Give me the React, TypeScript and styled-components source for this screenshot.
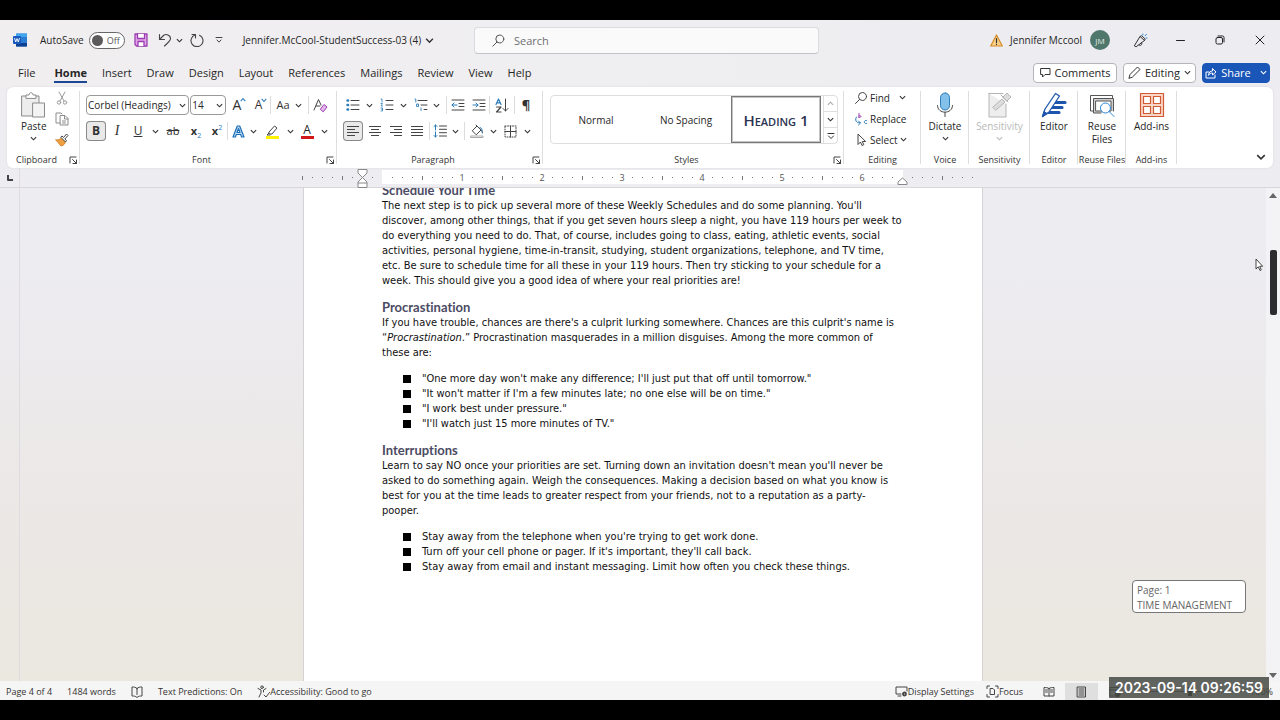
import React from "react";
import styled, { createGlobalStyle, css } from "styled-components";

const ui = `"Open Sans", "Noto Sans", sans-serif`;
const body = `"DejaVu Sans Condensed", "Open Sans", sans-serif`;

const Global = createGlobalStyle`
  *, *::before, *::after { box-sizing: border-box; }
  body { margin: 0; background: #000; }
  button, input, select { font: inherit; color: inherit; margin: 0; padding: 0; border: 0; background: none; }
  h2, p, ul { margin: 0; padding: 0; }
  svg { display: block; flex: none; }
`;

const Frame = styled.div`
  height: 100vh;
  padding: 20px 0;
  background: #000;
  display: flex;
  font-family: ${ui};
  font-size: 10px;
  color: #262626;
`;
const Win = styled.div`
  flex: 1;
  min-width: 0;
  display: flex;
  flex-direction: column;
  position: relative;
  background: linear-gradient(180deg, #efedf0 0%, #edecf1 34%, #ebe7e4 78%, #ebe8df 100%);
`;

/* ---------- title bar ---------- */
const TitleBar = styled.header`
  height: 40px;
  display: grid;
  grid-template-columns: minmax(0, 1fr) minmax(180px, 345px) minmax(0, 1fr);
  align-items: center;
  padding-left: 13px;
  background: linear-gradient(90deg, #f1eef0, #efeef0 45%, #ececf1);
`;
const Cluster = styled.div<{ $gap?: number; $end?: boolean }>`
  display: flex;
  align-items: center;
  gap: ${(p) => p.$gap ?? 0}px;
  justify-content: ${(p) => (p.$end ? "flex-end" : "flex-start")};
  white-space: nowrap;
`;
const SwitchLabel = styled.label`
  display: flex;
  align-items: center;
  gap: 5px;
  margin: 0 9px 0 13px;
`;
const Switch = styled.span`
  position: relative;
  width: 36px;
  height: 17px;
  border: 1px solid #666;
  border-radius: 9px;
  background: #fff;
  display: flex;
  align-items: center;
  justify-content: flex-end;
  padding-right: 4px;
  font-size: 9px;
  color: #555;
  &::before {
    content: "";
    position: absolute;
    left: 2px;
    top: 2px;
    width: 11px;
    height: 11px;
    border-radius: 50%;
    background: #5c5a5b;
  }
  input { position: absolute; inset: 0; opacity: 0; }
`;
const ToolBtn = styled.button<{ $w?: number; $on?: boolean }>`
  width: ${(p) => p.$w ?? 20}px;
  height: 20px;
  flex: none;
  display: flex;
  align-items: center;
  justify-content: center;
  border-radius: 4px;
  ${(p) => p.$on && css`background: #e9e9e9; box-shadow: inset 0 0 0 1px #8a8a8a;`}
`;
const DocTitle = styled.button`
  display: flex;
  align-items: center;
  gap: 4px;
  margin-left: 10px;
`;
const Search = styled.label`
  display: flex;
  align-items: center;
  gap: 9px;
  height: 27px;
  padding: 0 17px;
  background: #fbfafb;
  border: 1px solid #dcdadc;
  border-bottom-color: #c4c2c4;
  border-radius: 4px;
  font-size: 11px;
  input { flex: 1; min-width: 0; outline: 0; }
  input::placeholder { color: #707070; opacity: 1; }
`;
const Avatar = styled.span`
  width: 20px;
  height: 20px;
  border-radius: 50%;
  background: #4f776b;
  color: #e3ece8;
  font-size: 8px;
  display: grid;
  place-items: center;
  margin: 0 10px 0 8px;
`;
const WinBtn = styled.button`
  width: 40px;
  height: 28px;
  display: grid;
  place-items: center;
`;

/* ---------- tabs ---------- */
const TabRow = styled.nav`
  height: 27px;
  display: flex;
  align-items: center;
  gap: 1px;
  padding: 0 10px 2px 11px;
  background: linear-gradient(90deg, #f1eef0, #efeef0 45%, #ececf1);
`;
const Tab = styled.button<{ $on?: boolean; $first?: boolean }>`
  height: 20px;
  padding: 0 7px;
  margin-right: ${(p) => (p.$first ? 4 : 0)}px;
  font-size: 11px;
  position: relative;
  font-weight: ${(p) => (p.$on ? 700 : 400)};
  ${(p) => p.$on && css`
    &::after { content: ""; position: absolute; left: 7px; right: 7px; bottom: 0; height: 2px; background: #1d4697; }
  `}
`;
const TabActions = styled.div`
  margin-left: auto;
  display: flex;
  gap: 6px;
`;
const PillBtn = styled.button<{ $primary?: boolean; $w: number }>`
  width: ${(p) => p.$w}px;
  height: 20px;
  display: flex;
  align-items: center;
  justify-content: center;
  gap: 4px;
  border: 1px solid ${(p) => (p.$primary ? "#1a55b8" : "#b5b5b8")};
  border-radius: 4px;
  background: ${(p) => (p.$primary ? "#1a55b8" : "#fff")};
  color: ${(p) => (p.$primary ? "#fff" : "#262626")};
  font-size: 11px;
`;

/* ---------- ribbon ---------- */
const Ribbon = styled.section`
  height: 81px;
  margin: 0 7px;
  display: flex;
  background: #fff;
  border-radius: 6px;
  box-shadow: 0 0 2px #d5d3d8;
`;
const Group = styled.div<{ $w: number }>`
  position: relative;
  flex: none;
  width: ${(p) => p.$w}px;
  padding: 8px 6px 0 6px;
  display: flex;
  flex-direction: column;
  &::after { content: ""; position: absolute; right: 0; top: 4px; bottom: 4px; width: 1px; background: #dedede; }
`;
const GroupLabel = styled.div<{ $launch?: boolean }>`
  position: absolute;
  left: 0;
  right: ${(p) => (p.$launch ? 14 : 0)}px;
  bottom: 2px;
  line-height: 12px;
  text-align: center;
  font-size: 9px;
  white-space: nowrap;
  color: #333;
`;
const Launcher = styled.button`
  position: absolute;
  right: 1px;
  bottom: 2px;
  width: 12px;
  height: 12px;
  display: grid;
  place-items: center;
`;
const ToolRow = styled.div`
  display: flex;
  align-items: center;
  height: 20px;
  margin-bottom: 6px;
`;
const Gap = styled.span<{ $w: number }>`
  width: ${(p) => p.$w}px;
  flex: none;
`;
const Rule = styled.span`
  width: 1px;
  height: 18px;
  background: #dcdcdc;
  flex: none;
`;
const SelectBox = styled.label<{ $w: number }>`
  position: relative;
  width: ${(p) => p.$w}px;
  height: 20px;
  margin-right: 1px;
  border: 1px solid #999;
  border-radius: 4px;
  display: flex;
  align-items: center;
  select { appearance: none; width: 100%; height: 100%; padding-left: 1px; outline: 0; font-size: 10px; }
  svg { position: absolute; right: 2px; pointer-events: none; }
`;
const Big = styled.button<{ $dim?: boolean }>`
  display: flex;
  flex-direction: column;
  align-items: center;
  gap: 2px;
  margin-top: -3px;
  line-height: 13px;
  color: ${(p) => (p.$dim ? "#b9b9b9" : "#262626")};
`;
const ClipRow = styled.div`
  display: flex;
  gap: 5px;
  padding-left: 8px;
`;
const ClipTools = styled.div`
  display: flex;
  flex-direction: column;
  gap: 1px;
  margin-top: -7px;
`;
const Gallery = styled.div`
  display: flex;
  height: 49px;
  margin-left: 1px;
  border: 1px solid #dedede;
  border-radius: 4px;
`;
const StyleCell = styled.button<{ $on?: boolean }>`
  width: 90px;
  ${(p) => p.$on && css`border: 1px solid #777; box-shadow: inset 0 0 0 1px #c4c4c8;`}
`;
const HeadingSample = styled.span`
  font-size: 15px;
  font-weight: 600;
  font-variant: small-caps;
  color: #2a3350;
`;
const GalleryNav = styled.div`
  flex: 1;
  display: flex;
  flex-direction: column;
  margin-left: 2px;
  border-left: 1px solid #dedede;
  button { flex: 1; display: grid; place-items: center; }
  button + button { border-top: 1px solid #dedede; }
`;
const EditRow = styled.button`
  display: flex;
  align-items: center;
  height: 21px;
  gap: 2px;
  padding-left: 4px;
`;
const EditList = styled.div`
  display: flex;
  flex-direction: column;
  align-items: flex-start;
  margin-top: -8px;
`;
const Collapse = styled.button`
  margin: auto 5px 4px auto;
  width: 14px;
  height: 14px;
  display: grid;
  place-items: center;
`;

/* ---------- ruler ---------- */
const RulerRow = styled.div`
  height: 20px;
  display: flex;
  border-bottom: 1px solid #d9d7da;
  padding-right: 14px;
`;
const TabStop = styled.div`
  width: 20px;
  border-right: 1px solid #dedce0;
  display: grid;
  place-items: center;
`;
const RulerTrack = styled.div`
  flex: 1;
  display: flex;
  justify-content: center;
`;
const Ruler = styled.div`
  position: relative;
  width: 692px;
  flex: none;
  display: flex;
  align-items: center;
  background: linear-gradient(#fff, #fff) 85px 2px / 521px 14px no-repeat;
`;
const Mark = styled.span`
  width: 10px;
  flex: none;
  display: grid;
  place-items: center;
  font-size: 9px;
  line-height: 12px;
  color: #555;
`;
const Tick = styled.i<{ $long?: boolean }>`
  width: 1px;
  height: ${(p) => (p.$long ? 4 : 1)}px;
  background: #777;
`;
const Marker = styled.svg<{ $x: number }>`
  position: absolute;
  left: ${(p) => p.$x}px;
  top: 1px;
`;

/* ---------- document ---------- */
const Work = styled.div`
  flex: 1;
  min-height: 0;
  display: flex;
`;
const SideRuler = styled.div`
  width: 20px;
  border-right: 1px solid #dedce0;
`;
const Canvas = styled.main`
  flex: 1;
  min-width: 0;
  overflow: hidden;
  display: flex;
  justify-content: center;
`;
const Page = styled.article`
  width: 680px;
  flex: none;
  padding: 0 78px;
  background: #fff;
  border: solid #d4d2d4;
  border-width: 0 1px;
  font-family: ${body};
  font-size: 11px;
  line-height: 15px;
  color: #111;
  white-space: nowrap;
`;
const H = styled.h2<{ $cut?: boolean }>`
  font-family: Lato, sans-serif;
  font-size: 13px;
  line-height: 15px;
  font-weight: 700;
  font-variant-ligatures: none;
  color: #4b4b63;
  margin-top: ${(p) => (p.$cut ? -5 : 12)}px;
`;
const Bullets = styled.ul`
  list-style: none;
  padding: 11px 0 0 21px;
  li { display: flex; align-items: center; gap: 11px; }
  li::before { content: ""; width: 8px; height: 8px; background: #000; }
`;
const Scroll = styled.div`
  width: 14px;
  background: #f3f2f4;
  display: flex;
  flex-direction: column;
  align-items: center;
  padding: 5px 0 3px 0;
`;
const Thumb = styled.div`
  width: 7px;
  height: 65px;
  margin: 52px 0 auto;
  border-radius: 2px;
  background: #2d2d2f;
`;
const Arrow = styled.i<{ $down?: boolean }>`
  border: solid transparent;
  border-width: 0 4px;
  ${(p) => (p.$down ? css`border-top: 5px solid #666;` : css`border-bottom: 5px solid #666;`)}
`;
const PageTip = styled.div`
  position: absolute;
  right: 34px;
  bottom: 87px;
  width: 114px;
  height: 33px;
  padding: 2px 4px;
  border: 1px solid #777;
  border-radius: 4px;
  background: #fff;
  color: #666;
  line-height: 15px;
  white-space: nowrap;
`;
const Cursor = styled.svg`
  position: absolute;
  right: 17px;
  top: 238px;
`;

/* ---------- status bar ---------- */
const Status = styled.footer`
  height: 19px;
  display: flex;
  align-items: center;
  justify-content: space-between;
  background: #f6f5f5;
  padding: 2px 7px 0 6px;
  font-size: 9px;
  color: #333;
  white-space: nowrap;
`;
const StatusBtn = styled.button`
  display: flex;
  align-items: center;
`;
const ViewBtn = styled.button<{ $on?: boolean }>`
  width: 33px;
  height: 17px;
  display: grid;
  place-items: center;
  background: ${(p) => (p.$on ? "#dfdfdf" : "transparent")};
`;
const Zoom = styled.input`
  appearance: none;
  width: 105px;
  height: 12px;
  margin: 0 8px 0 6px;
  background: linear-gradient(#666, #666) center / 100% 1px no-repeat;
  &::-webkit-slider-thumb { appearance: none; width: 4px; height: 9px; background: #222; }
`;
const Stamp = styled.time`
  position: absolute;
  right: 11px;
  bottom: 2px;
  width: 160px;
  height: 21px;
  display: grid;
  place-items: center;
  background: rgba(72, 74, 70, 0.86);
  color: #fff;
  font: 600 14px Inter, sans-serif;
`;

/* ---------- icons ---------- */
const Chev = ({ s = 7, c = "#333", up = false }: { s?: number; c?: string; up?: boolean }) => (
  <svg width={s} height={s} viewBox="0 0 8 8" fill="none" stroke={c} strokeWidth="1.3">
    <path d={up ? "M1 5.5 4 2.5 7 5.5" : "M1 2.5 4 5.5 7 2.5"} />
  </svg>
);
const Ic = ({ w = 16, h = w, c = "#444", sw = 1, children }: { w?: number; h?: number; c?: string; sw?: number; children: React.ReactNode }) => (
  <svg width={w} height={h} viewBox={`0 0 ${w} ${h}`} fill="none" stroke={c} strokeWidth={sw} strokeLinecap="round" strokeLinejoin="round">
    {children}
  </svg>
);
const LaunchIcon = () => (
  <Ic w={9} c="#444"><path d="M1 7V1h6M3.500 3.500 7.500 7.500M7.500 4v3.500H4" /></Ic>
);
const blue = "#2b7cba";
const Lines = ({ rows }: { rows: [number, number][] }) => (
  <Ic w={14} c="#444"><path d={rows.map(([a, b], i) => `M${a} ${2.5 + i * 3}H${b}`).join("")} strokeLinecap="butt" /></Ic>
);

const Glyph = styled.span<{ $size?: number; $weight?: number; $italic?: boolean; $deco?: string; $serif?: boolean }>`
  position: relative;
  font-family: ${(p) => (p.$serif ? `"Liberation Serif", serif` : ui)};
  font-size: ${(p) => p.$size ?? 13}px;
  font-weight: ${(p) => p.$weight ?? 400};
  font-style: ${(p) => (p.$italic ? "italic" : "normal")};
  text-decoration: ${(p) => p.$deco ?? "none"};
  line-height: 16px;
  color: #333;
  sub, sup { font-size: 7px; line-height: 0; color: ${blue}; font-weight: 400; }
  svg { position: absolute; right: -5px; top: 0; }
`;
const ColorBar = styled.span<{ $c: string }>`
  display: flex;
  flex-direction: column;
  align-items: center;
  font-size: 12px;
  line-height: 12px;
  &::after { content: ""; width: 13px; height: 3px; background: ${(p) => p.$c}; }
`;

/* 0" sits at index 8; each inch has eight subdivisions */
const rulerMark = (i: number) => {
  if (i === 6 || i === 8 || i === 60) return null;
  if (i > 8 && i < 60 && (i - 8) % 8 === 0) return (i - 8) / 8;
  return <Tick $long={i % 4 === 0} />;
};

const tabs = ["File", "Home", "Insert", "Draw", "Design", "Layout", "References", "Mailings", "Review", "View", "Help"];

export default function App() {
  return (
    <Frame>
      <Global />
      <Win>
        <TitleBar>
          <Cluster>
            <svg width="14" height="14" viewBox="0 0 14 14">
              <rect x="3" y="0.5" width="11" height="13" rx="1" fill="#2b7cd3" />
              <path d="M3 0.5h11v3.5H3z" fill="#41a5ee" />
              <path d="M3 10h11v3.5H3z" fill="#103f91" />
              <rect x="0" y="3" width="8" height="8" rx="1" fill="#185abd" />
              <path d="M1.5 5 2.7 9 4 5.6 5.3 9 6.5 5" fill="none" stroke="#fff" strokeWidth="0.9" />
            </svg>
            <SwitchLabel>
              AutoSave
              <Switch><input type="checkbox" aria-label="AutoSave" />Off</Switch>
            </SwitchLabel>
            <ToolBtn $w={15} aria-label="Save">
              <Ic w={14} c="#9b3fb0" sw={1.3}><path d="M1 1h12v12H2.500L1 11.500z" fill="#e3a5ea" /><path d="M3.500 1v4.500h7V1M4 13V8.500h6V13" fill="#fff" /></Ic>
            </ToolBtn>
            <Gap $w={9} />
            <ToolBtn $w={15} aria-label="Undo">
              <Ic w={14} c="#444" sw={1.1}><path d="M1.500 1.500v5h5M1.500 6.500 5.500 2.500C8 .5 12.500 2 12.500 5.500 12.500 8 10 9.500 6.500 13" /></Ic>
            </ToolBtn>
            <ToolBtn $w={14} aria-label="Undo history"><Chev s={7} /></ToolBtn>
            <ToolBtn $w={20} aria-label="Redo">
              <Ic w={14} c="#444" sw={1.1}><path d="M2 1.500h3.500V5M5 2A6 6 0 1 0 9.500 2.200" /></Ic>
            </ToolBtn>
            <ToolBtn $w={24} aria-label="Customize toolbar">
              <Ic w={8} c="#444"><path d="M1 1.500h6M2 4l2 2.200L6 4" /></Ic>
            </ToolBtn>
            <Gap $w={2} />
            <DocTitle>Jennifer.McCool-StudentSuccess-03 (4)<Chev s={9} /></DocTitle>
          </Cluster>
          <Search>
            <Ic w={13} c="#555"><circle cx="7.800" cy="5" r="4" /><path d="M5 8 .8 12.200" /></Ic>
            <input type="search" placeholder="Search" aria-label="Search" />
          </Search>
          <Cluster $end>
            <Ic w={13} c="#d58a24" sw={1.2}><path d="M6.500 1 12.300 12H.7z" fill="#f8d08a" /><path d="M6.500 4.500v4M6.500 10v.4" stroke="#333" /></Ic>
            <Gap $w={7} />
            Jennifer Mccool
            <Avatar>JM</Avatar>
            <WinBtn aria-label="Coming soon">
              <Ic w={15} c="#333"><path d="M1.500 12.500 7 3.500 11.500 7.500 3.500 13.500zM7 3.500l1.500-.8 3.700 3.300-.7 1.500M6 12c2 1.500 3.500-.5 2.500-2.500" /><path d="M9.800 1v1M12 2.800l1.500-1.500M13 5h1" stroke="#2b88d8" /></Ic>
            </WinBtn>
            <WinBtn aria-label="Minimize"><Ic w={9} c="#222"><path d="M.5 4.500h8" /></Ic></WinBtn>
            <WinBtn aria-label="Restore"><Ic w={10} c="#222"><rect x="1" y="2.500" width="6.500" height="6.500" rx="1.500" /><path d="M3 1h4.500A1.500 1.500 0 0 1 9 2.500V7" /></Ic></WinBtn>
            <WinBtn aria-label="Close"><Ic w={10} c="#222"><path d="m1 1 8 8M9 1 1 9" /></Ic></WinBtn>
          </Cluster>
        </TitleBar>

        <TabRow>
          {tabs.map((t) => <Tab key={t} $on={t === "Home"} $first={t === "File"}>{t}</Tab>)}
          <TabActions>
            <PillBtn $w={84}><Ic w={11} c="#333"><path d="M1 1.500h9v6H5L2.500 10V7.500H1z" /></Ic>Comments</PillBtn>
            <PillBtn $w={73}><Ic w={13} c="#333"><path d="M1 12 2 8.500 9.500 1 12 3.500 4.500 11z" /></Ic>Editing<Chev s={7} /></PillBtn>
            <PillBtn $w={68} $primary><Ic w={12} c="#fff"><path d="M4 5H1v6h9V8M3.500 8c.5-3 2-4 4-4V1.500L11 5 7.500 8V6C6 6 4.500 6.500 3.500 8z" /></Ic>Share<Gap $w={1} /><Chev s={7} c="#fff" /></PillBtn>
          </TabActions>
        </TabRow>

        <Ribbon>
          <Group $w={73}>
            <ClipRow>
              <Big>
                <Ic w={25} h={26} c="#8b8b8b"><path d="M1 4h17v20H1z" fill="#ededed" /><path d="M5 6V3h3c0-3 4-3 4 0h3v3z" fill="#fff" /><path d="M12 11h11.500v14H12z" fill="#f4f4f4" /></Ic>
                Paste
                <Chev s={7} />
              </Big>
              <ClipTools>
                <ToolBtn aria-label="Cut"><Ic w={12} h={14} c="#9a9a9a"><path d="M3 1l5 9M9 1 4 10" /><circle cx="3" cy="11.500" r="1.700" /><circle cx="9" cy="11.500" r="1.700" /></Ic></ToolBtn>
                <ToolBtn aria-label="Copy"><Ic w={14} c="#8b8b8b"><path d="M5 11H1V1h5l1 1" /><path d="M5.500 3.500H10L13 6.500V13H5.500zM9.500 3.500V7H13M7.500 9h3M7.500 11h3" /></Ic></ToolBtn>
                <ToolBtn aria-label="Format painter"><Ic w={14} c="#444"><path d="M1 7l5 6c3-.5 4-2.500 4.500-4.500L6.500 5C5 6.500 3 7 1 7z" fill="#f0a040" stroke="#d5842a" /><path d="M6 4.500 10.500 9l1-1.500L9.800 6 13 2.500 11.500 1 8.500 4.500 7.200 3.200z" fill="#fff" /></Ic></ToolBtn>
              </ClipTools>
            </ClipRow>
            <GroupLabel $launch>Clipboard</GroupLabel>
            <Launcher aria-label="Clipboard settings"><LaunchIcon /></Launcher>
          </Group>

          <Group $w={257}>
            <ToolRow>
              <SelectBox $w={104}><select aria-label="Font"><option>Corbel (Headings)</option></select><Chev s={7} /></SelectBox>
              <SelectBox $w={36}><select aria-label="Font size"><option>14</option></select><Chev s={7} /></SelectBox>
              <ToolBtn $w={20} aria-label="Grow font"><Glyph $size={14}>A<svg width="6" height="6" viewBox="0 0 8 8" fill="none" stroke={blue} strokeWidth="1.5"><path d="M1 5.500 4 2 7 5.500" /></svg></Glyph></ToolBtn>
              <ToolBtn $w={23} aria-label="Shrink font"><Glyph $size={12}>A<svg width="6" height="6" viewBox="0 0 8 8" fill="none" stroke={blue} strokeWidth="1.5"><path d="M1 2.500 4 6 7 2.500" /></svg></Glyph></ToolBtn>
              <Rule />
              <ToolBtn aria-label="Change case" $w={24}><Glyph $size={11}>Aa</Glyph></ToolBtn>
              <Chev s={7} />
              <Gap $w={6} />
              <Rule />
              <ToolBtn $w={22} aria-label="Clear formatting">
                <Ic w={15} c="#444"><path d="M1 12 5.500 1.500 8 7M3 8h4" /><path d="M7.500 11 11 6.500 14 9 10.500 13.500z" fill="#e5b8ee" stroke="#9b3fb0" /></Ic>
              </ToolBtn>
            </ToolRow>
            <ToolRow>
              <ToolBtn $on aria-label="Bold"><Glyph $size={12} $weight={700}>B</Glyph></ToolBtn>
              <Gap $w={1} />
              <ToolBtn aria-label="Italic"><Glyph $italic $serif $size={14}>I</Glyph></ToolBtn>
              <ToolBtn $w={22} aria-label="Underline"><Glyph $deco="underline" $size={12}>U</Glyph></ToolBtn>
              <ToolBtn $w={12} aria-label="Underline style"><Chev s={7} /></ToolBtn>
              <ToolBtn $w={24} aria-label="Strikethrough"><Glyph $deco="line-through" $size={11}>ab</Glyph></ToolBtn>
              <ToolBtn $w={22} aria-label="Subscript"><Glyph $size={11} $weight={700}>x<sub>2</sub></Glyph></ToolBtn>
              <ToolBtn $w={20} aria-label="Superscript"><Glyph $size={11} $weight={700}>x<sup>2</sup></Glyph></ToolBtn>
              <Rule />
              <ToolBtn $w={20} aria-label="Text effects">
                <Ic w={13} c="#1f6fb8" sw={1.2}><path d="M1 12 5.300 1h2.400L12 12H9.600L8.700 9.500H4.300L3.400 12zM5 7.500h3L6.500 3.500z" fill="#bcdcf5" /></Ic>
              </ToolBtn>
              <ToolBtn $w={10} aria-label="Effects menu"><Chev s={7} /></ToolBtn>
              <ToolBtn $w={28} aria-label="Highlight">
                <ColorBar $c="#fff200"><Ic w={12} h={12} c="#444"><path d="M3 8 8.500 2 11 4 6 10H3.500zM3 9l-2 2h3" /></Ic></ColorBar>
              </ToolBtn>
              <ToolBtn $w={8} aria-label="Highlight color"><Chev s={7} /></ToolBtn>
              <ToolBtn $w={26} aria-label="Font color"><ColorBar $c="#d01818">A</ColorBar></ToolBtn>
              <ToolBtn $w={8} aria-label="Font color menu"><Chev s={7} /></ToolBtn>
            </ToolRow>
            <GroupLabel $launch>Font</GroupLabel>
            <Launcher aria-label="Font settings"><LaunchIcon /></Launcher>
          </Group>

          <Group $w={206}>
            <ToolRow>
              <ToolBtn aria-label="Bullets"><Ic w={14} c="#444"><path d="M5 2.500h8M5 7h8M5 11.500h8" /><path d="M1.500 2.500h.6M1.500 7h.6M1.500 11.500h.6" stroke={blue} strokeWidth="2.4" /></Ic></ToolBtn>
              <ToolBtn $w={12} aria-label="Bullet menu"><Chev s={7} /></ToolBtn>
              <Gap $w={2} />
              <ToolBtn aria-label="Numbering"><Ic w={14} c="#444"><path d="M6 2.500h7M6 7h7M6 11.500h7" /><path d="M1 1h1v3M1 5.500h1.500L1 8h1.500M1 10h1.500v1.200H1.500h1v1.800H1" stroke={blue} strokeWidth=".8" /></Ic></ToolBtn>
              <ToolBtn $w={12} aria-label="Numbering menu"><Chev s={7} /></ToolBtn>
              <Gap $w={2} />
              <ToolBtn aria-label="Multilevel list"><Ic w={14} c="#444"><path d="M4 2.500h9M7 7h6M10 11.500h3" /><path d="M1 1h.8v3M3 6h1.500v2.500H3zM7 10v2.500" stroke={blue} strokeWidth=".9" /></Ic></ToolBtn>
              <ToolBtn $w={10} aria-label="List menu"><Chev s={7} /></ToolBtn>
              <Gap $w={5} />
              <Rule />
              <ToolBtn $w={21} aria-label="Decrease indent"><Ic w={14}><path d="M1 2h12M8 5.500h5M8 8.500h5M1 12h12" /><path d="M6 7H1M3 5 1 7l2 2" stroke={blue} /></Ic></ToolBtn>
              <ToolBtn $w={21} aria-label="Increase indent"><Ic w={14}><path d="M1 2h12M8 5.500h5M8 8.500h5M1 12h12" /><path d="M1 7h5M4 5l2 2-2 2" stroke={blue} /></Ic></ToolBtn>
              <Rule />
              <ToolBtn $w={24} aria-label="Sort"><Ic w={14} h={15}><path d="M1 6.500 3.500 1 6 6.500M2 4.800h3" stroke={blue} strokeWidth="1.2" /><path d="M1.500 9H6l-4.500 5H6" strokeWidth="1.2" /><path d="M10.500 1v12M8 10.500l2.500 2.500 2.500-2.500" /></Ic></ToolBtn>
              <Rule />
              <ToolBtn $w={22} aria-label="Paragraph marks"><Glyph $size={13} $weight={700}>¶</Glyph></ToolBtn>
            </ToolRow>
            <ToolRow>
              <ToolBtn $on aria-label="Align left"><Lines rows={[[1, 13], [1, 9], [1, 13], [1, 9]]} /></ToolBtn>
              <Gap $w={1} />
              <ToolBtn $w={21} aria-label="Center"><Lines rows={[[1, 13], [3, 11], [1, 13], [3, 11]]} /></ToolBtn>
              <ToolBtn $w={21} aria-label="Align right"><Lines rows={[[1, 13], [5, 13], [1, 13], [5, 13]]} /></ToolBtn>
              <ToolBtn $w={22} aria-label="Justify"><Lines rows={[[1, 13], [1, 13], [1, 13], [1, 13]]} /></ToolBtn>
              <Gap $w={1} />
              <Rule />
              <ToolBtn $w={20} aria-label="Line spacing"><Ic w={14}><path d="M6.500 2h7M6.500 5.300h7M6.500 8.700h7M6.500 12h7" /><path d="M2.500 6V1M1 2.500 2.500 1 4 2.500M2.500 8v5M1 11.500 2.500 13 4 11.500" stroke={blue} /></Ic></ToolBtn>
              <ToolBtn $w={10} aria-label="Spacing menu"><Chev s={7} /></ToolBtn>
              <Gap $w={4} />
              <Rule />
              <ToolBtn $w={24} aria-label="Shading"><Ic w={14}><path d="M2.500 6.500 7 2l4 4-4.500 4.500zM6 1l2 2M11 6c1.500 1 1.500 2 1.500 3" /><path d="M1 12h12v1.500H1z" stroke="#aaa" /><path d="M10 3.500c2 .5 2.500 2.500 2 4.500" stroke={blue} /></Ic></ToolBtn>
              <ToolBtn $w={8} aria-label="Shading menu"><Chev s={7} /></ToolBtn>
              <ToolBtn $w={26} aria-label="Borders"><Ic w={13}><path d="M1 1h11v11H1z" strokeDasharray="1 1.5" /><path d="M1 6.500h11M6.500 1v11" /></Ic></ToolBtn>
              <ToolBtn $w={8} aria-label="Borders menu"><Chev s={7} /></ToolBtn>
            </ToolRow>
            <GroupLabel $launch>Paragraph</GroupLabel>
            <Launcher aria-label="Paragraph settings"><LaunchIcon /></Launcher>
          </Group>

          <Group $w={301}>
            <Gallery>
              <StyleCell>Normal</StyleCell>
              <StyleCell>No Spacing</StyleCell>
              <StyleCell $on><HeadingSample>Heading 1</HeadingSample></StyleCell>
              <GalleryNav>
                <button aria-label="Previous styles"><Chev s={7} c="#aaa" up /></button>
                <button aria-label="Next styles"><Chev s={7} /></button>
                <button aria-label="More styles"><Ic w={8} c="#333"><path d="M1 1.500h6M1.500 4 4 6.500 6.500 4" /></Ic></button>
              </GalleryNav>
            </Gallery>
            <GroupLabel $launch>Styles</GroupLabel>
            <Launcher aria-label="Style settings"><LaunchIcon /></Launcher>
          </Group>

          <Group $w={77}>
            <EditList>
              <EditRow><Ic w={14}><circle cx="8.500" cy="5.500" r="4" /><path d="M5.500 8.500 1.500 12.500" /></Ic>Find<Gap $w={5} /><Chev s={7} /></EditRow>
              <EditRow><Ic w={14}><path d="M5 1.500v4M5 4c2-1.500 3.500 1.500 0 1.500" stroke="#9b3fb0" /><path d="M12.500 8.500c-3-1-3 4 0 3M2.500 5C.5 8 2 11 6 11M4.500 9 6.500 11 4.500 13" stroke={blue} /></Ic>Replace</EditRow>
              <EditRow><Ic w={14}><path d="M4 1.500v10l2.500-2.500L8 12.500l1.800-.8L8.300 8.500h3z" /></Ic>Select<Chev s={7} /></EditRow>
            </EditList>
            <GroupLabel>Editing</GroupLabel>
          </Group>

          <Group $w={48}>
            <Big>
              <Ic w={18} h={26} c="#444"><rect x="4.500" y="1" width="9" height="17" rx="4.500" fill="#83c0ea" stroke="#2b7cba" /><path d="M1.500 13.500c0 9 15 9 15 0M9 20.500v4" /></Ic>
              Dictate<Chev s={7} />
            </Big>
            <GroupLabel>Voice</GroupLabel>
          </Group>
          <Group $w={61}>
            <Big $dim>
              <Ic w={24} h={26} c="#b5b5b5"><path d="M1 1.500h14M1 1.500V25h17V12" fill="#eee" /><path d="M5 15l9-8 3 3-9 8zM15 5l4-4 4 4-4 4zM13 3l7 7" fill="#ddd" /></Ic>
              Sensitivity<Chev s={7} c="#b9b9b9" />
            </Big>
            <GroupLabel>Sensitivity</GroupLabel>
          </Group>
          <Group $w={48}>
            <Big>
              <Ic w={26} c="#1e56ad"><path d="M12 10.500h12M10 15.500h11M7 20.500h11" strokeWidth="3.2" /><path d="M1.500 24.500 4 17 14.500 1.500l4 2.500L8 20z" fill="#fff" strokeWidth="1.3" /><path d="M1.500 24.500 3 19.500l3 2z" fill="#1e56ad" /></Ic>
              Editor
            </Big>
            <GroupLabel>Editor</GroupLabel>
          </Group>
          <Group $w={48}>
            <Big>
              <Ic w={26} c="#555"><path d="M4 19H1.500V3.500h22V8" /><path d="M12 21H4.500V6.500h20V19" fill="#d0d0d0" /><path d="M7 9h15v10H7z" fill="#fff" /><circle cx="16.500" cy="16" r="5" fill="#fff" stroke="#2b88d8" /><path d="m20 19.500 5 5" stroke="#2b88d8" /></Ic>
              <span>Reuse<br />Files</span>
            </Big>
            <GroupLabel>Reuse Files</GroupLabel>
          </Group>
          <Group $w={51}>
            <Big>
              <Ic w={26} c="#cf5a34" sw={1.2}><path d="M1.500 1.500h23v23h-23z" fill="#fbd5c6" /><path d="M4.500 4.500h7v7h-7zM14.500 4.500h7v7h-7zM4.500 14.500h7v7h-7zM14.500 14.500h7v7h-7z" fill="#fff" /></Ic>
              Add-ins
            </Big>
            <GroupLabel>Add-ins</GroupLabel>
          </Group>
          <Collapse aria-label="Collapse ribbon"><Chev s={10} /></Collapse>
        </Ribbon>

        <RulerRow>
          <TabStop><Ic w={6} sw={2}><path d="M1 0v5h5" strokeLinecap="butt" /></Ic></TabStop>
          <RulerTrack>
            <Ruler>
              {Array.from({ length: 68 }, (_, i) => <Mark key={i}>{rulerMark(i)}</Mark>)}
              <Marker $x={60} width="11" height="19" viewBox="0 0 11 19" fill="#fff" stroke="#888"><path d="M1 .5h9V4L5.500 8.500 1 4zM5.500 8.500 10 13v5.500H1V13zM1 14h9" /></Marker>
              <Marker $x={600} width="11" height="19" viewBox="0 0 11 19" fill="#fff" stroke="#888"><path d="M5.500 9 10 13v2.500H1V13z" /></Marker>
            </Ruler>
          </RulerTrack>
        </RulerRow>

        <Work>
          <SideRuler />
          <Canvas>
            <Page>
              <H $cut>Schedule Your Time</H>
              <p>
                The next step is to pick up several more of these Weekly Schedules and do some planning. You'll<br />
                discover, among other things, that if you get seven hours sleep a night, you have 119 hours per week to<br />
                do everything you need to do. That, of course, includes going to class, eating, athletic events, social<br />
                activities, personal hygiene, time-in-transit, studying, student organizations, telephone, and TV time,<br />
                etc. Be sure to schedule time for all these in your 119 hours. Then try sticking to your schedule for a<br />
                week. This should give you a good idea of where your real priorities are!
              </p>
              <H>Procrastination</H>
              <p>
                If you have trouble, chances are there's a culprit lurking somewhere. Chances are this culprit's name is<br />
                “<em>Procrastination</em>.” Procrastination masquerades in a million disguises. Among the more common of<br />
                these are:
              </p>
              <Bullets>
                <li>"One more day won't make any difference; I'll just put that off until tomorrow."</li>
                <li>"It won't matter if I'm a few minutes late; no one else will be on time."</li>
                <li>"I work best under pressure."</li>
                <li>"I'll watch just 15 more minutes of TV."</li>
              </Bullets>
              <H>Interruptions</H>
              <p>
                Learn to say NO once your priorities are set. Turning down an invitation doesn't mean you'll never be<br />
                asked to do something again. Weigh the consequences. Making a decision based on what you know is<br />
                best for you at the time leads to greater respect from your friends, not to a reputation as a party-<br />
                pooper.
              </p>
              <Bullets>
                <li>Stay away from the telephone when you're trying to get work done.</li>
                <li>Turn off your cell phone or pager. If it's important, they'll call back.</li>
                <li>Stay away from email and instant messaging. Limit how often you check these things.</li>
              </Bullets>
            </Page>
          </Canvas>
          <Scroll><Arrow /><Thumb /><Arrow $down /></Scroll>
        </Work>

        <Status>
          <Cluster $gap={15}>
            <span>Page 4 of 4</span>
            <span>1484 words</span>
            <StatusBtn aria-label="Proofing"><Ic w={12}><path d="M6 2.500C4.500 1 3 1 1 1v9c2 0 3.500 0 5 1.500C7.500 10 9 10 11 10V1C9 1 7.500 1 6 2.500zM6 2.500v6" /></Ic></StatusBtn>
            <span>Text Predictions: On</span>
            <StatusBtn><Ic w={13}><circle cx="5" cy="2.200" r="1.300" /><path d="M1 3.500 4 5v3L2 12M9 3.500 6.500 5v2M7 10l2 2 3.500-4.500" /></Ic>Accessibility: Good to go</StatusBtn>
          </Cluster>
          <Cluster>
            <StatusBtn><Ic w={13}><path d="M6 9H1V2h11v4M3 11h3" /><circle cx="9.500" cy="9" r="1.500" strokeWidth="1.8" /></Ic>Display Settings</StatusBtn>
            <Gap $w={12} />
            <StatusBtn><Ic w={13}><path d="M3.500 1H1v2.500M9.500 1H12v2.500M3.500 12H1V9.500M9.500 12H12V9.500M4.500 3.500h2.500l1.500 1.500v4.500h-4z" /></Ic>Focus</StatusBtn>
            <Gap $w={9} />
            <ViewBtn aria-label="Read mode"><Ic w={12}><path d="M6 2.500C4.500 1.500 3 1.500 1 1.500v8.500h10V1.500C9 1.500 7.500 1.500 6 2.500zV10M2.500 4h2M2.500 6h2M7.500 4h2M7.500 6h2" /></Ic></ViewBtn>
            <ViewBtn $on aria-label="Print layout"><Ic w={11} h={12}><path d="M1.500 1h8v10h-8zM3 3h5M3 5h5M3 7h5M3 9h5" /></Ic></ViewBtn>
            <ViewBtn aria-label="Web layout"><Ic w={12}><path d="M1 1.500h9v3M1 1.500V10h4M1 4h9" /><circle cx="8.500" cy="8.500" r="2.500" fill="#222" /></Ic></ViewBtn>
            <Zoom type="range" aria-label="Zoom" defaultValue={50} />
            <span>100%</span>
          </Cluster>
        </Status>

        <PageTip>Page: 1<br />TIME MANAGEMENT</PageTip>
        <Cursor width="8" height="14" viewBox="0 0 8 14" fill="#fff" stroke="#333" strokeWidth="0.9"><path d="M1 1v10l2.300-2.200L5 12.500l1.300-.6-1.600-3.600h3z" /></Cursor>
        <Stamp dateTime="2023-09-14T09:26:59">2023-09-14 09:26:59</Stamp>
      </Win>
    </Frame>
  );
}
